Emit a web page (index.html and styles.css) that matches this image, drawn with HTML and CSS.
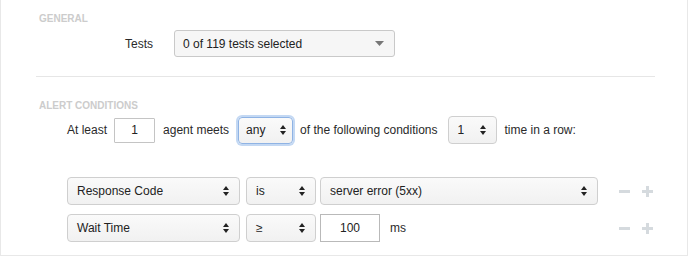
FILE: index.html
```html
<!DOCTYPE html>
<html>
<head>
<meta charset="utf-8">
<link rel="stylesheet" href="styles.css">
</head>
<body>
<div class="panel">
  <section class="general">
    <div class="section-title">GENERAL</div>
    <div class="tests-row">
      <span class="field-label">Tests</span>
      <div class="dropdown tests-dd">
        <span class="dd-text">0 of 119 tests selected</span>
        <svg class="caret" width="9" height="5" viewBox="0 0 9 5"><path d="M0 0h9L4.5 5z" fill="#777"/></svg>
      </div>
    </div>
  </section>
  <hr class="divider">
  <section class="alert">
    <div class="section-title">ALERT CONDITIONS</div>
    <div class="summary-row">
      <span>At least</span>
      <div class="textbox tb-agents">1</div>
      <span>agent meets</span>
      <div class="select sel-any focused"><span>any</span><svg class="updown" width="6" height="10" viewBox="0 0 6 10"><path d="M0 4L3 0L6 4z M0 6L3 10L6 6z" fill="#222"/></svg></div>
      <span>of the following conditions</span>
      <div class="select sel-times"><span>1</span><svg class="updown" width="6" height="10" viewBox="0 0 6 10"><path d="M0 4L3 0L6 4z M0 6L3 10L6 6z" fill="#222"/></svg></div>
      <span>time in a row:</span>
    </div>
    <div class="conditions">
      <div class="cond-row">
        <div class="select sel-metric"><span>Response Code</span><svg class="updown" width="6" height="10" viewBox="0 0 6 10"><path d="M0 4L3 0L6 4z M0 6L3 10L6 6z" fill="#222"/></svg></div>
        <div class="select sel-op"><span>is</span><svg class="updown" width="6" height="10" viewBox="0 0 6 10"><path d="M0 4L3 0L6 4z M0 6L3 10L6 6z" fill="#222"/></svg></div>
        <div class="select sel-value"><span>server error (5xx)</span><svg class="updown" width="6" height="10" viewBox="0 0 6 10"><path d="M0 4L3 0L6 4z M0 6L3 10L6 6z" fill="#222"/></svg></div>
        <div class="row-actions"><span class="minus"></span><span class="plus"></span></div>
      </div>
      <div class="cond-row">
        <div class="select sel-metric"><span>Wait Time</span><svg class="updown" width="6" height="10" viewBox="0 0 6 10"><path d="M0 4L3 0L6 4z M0 6L3 10L6 6z" fill="#222"/></svg></div>
        <div class="select sel-op"><span>≥</span><svg class="updown" width="6" height="10" viewBox="0 0 6 10"><path d="M0 4L3 0L6 4z M0 6L3 10L6 6z" fill="#222"/></svg></div>
        <div class="textbox tb-ms">100</div>
        <span class="unit">ms</span>
        <div class="row-actions"><span class="minus"></span><span class="plus"></span></div>
      </div>
    </div>
  </section>
</div>
</body>
</html>
```

FILE: styles.css
```css
* { box-sizing: border-box; }
html, body { margin: 0; padding: 0; background: #fff; }
body {
  font-family: "Liberation Sans", Arial, Helvetica, sans-serif;
  font-size: 12px;
  color: #2a2a2a;
}
.panel {
  width: 688px;
  height: 256px;
  border: 1px solid #e8e8e8;
  border-top: none;
}
.section-title {
  font-size: 10px;
  line-height: 12px;
  font-weight: bold;
  color: #cccccc;
  padding-left: 38px;
}
.general { padding-top: 13px; }
.tests-row {
  display: flex;
  align-items: center;
  margin-top: 5px;
  padding-left: 124px;
}
.field-label { width: 49px; }
.dropdown {
  display: flex;
  align-items: center;
  justify-content: space-between;
  height: 27px;
  border: 1px solid #c9c9c9;
  border-radius: 3px;
  background: #f6f6f6;
  padding: 0 10px 0 8px;
  color: #222;
}
.tests-dd { width: 221px; }
.divider {
  border: none;
  border-top: 1px solid #e6e6e6;
  margin: 19px 0 0 35px;
  width: 619px;
  height: 0;
}
.alert { padding-top: 23px; }
.summary-row {
  display: flex;
  align-items: center;
  margin-top: 4px;
  padding-left: 66px;
  white-space: nowrap;
}
.textbox {
  display: flex;
  align-items: center;
  justify-content: center;
  border: 1px solid #c4c4c4;
  border-radius: 1px;
  background: #fff;
  color: #222;
}
.tb-agents { width: 41px; height: 25px; margin: 0 8px 0 7px; }
.select {
  display: flex;
  align-items: center;
  justify-content: space-between;
  border: 1px solid #cfcfcf;
  border-radius: 4px;
  background: linear-gradient(#fafafa, #f1f1f1);
  color: #222;
  padding: 0 10px 0 9px;
  height: 28px;
}
.updown { flex: none; }
.sel-any {
  width: 55px;
  height: 27px;
  margin: 0 7px 0 9px;
  padding: 0 6px 0 7px;
}
.focused {
  border-color: #8fb3e4;
  box-shadow: 0 0 0 2px #c3d8f3;
}
.sel-times { width: 49px; margin: 0 8px 0 10px; }
.conditions {
  margin-top: 33px;
  padding-left: 66px;
  display: flex;
  flex-direction: column;
  gap: 9px;
}
.cond-row {
  display: flex;
  align-items: center;
}
.sel-metric { width: 173px; }
.sel-op { width: 70px; margin: 0 4px 0 6px; }
.sel-value { width: 278px; }
.tb-ms { width: 60px; height: 28px; border-color: #b9b9b9; border-radius: 0; }
.unit { margin-left: 10px; width: 208px; }
.row-actions {
  display: flex;
  align-items: center;
  gap: 12px;
  margin-left: 21px;
}
.minus {
  display: block;
  width: 11px;
  height: 3px;
  background: #d5dade;
}
.plus {
  position: relative;
  display: block;
  width: 11px;
  height: 11px;
}
.plus::before, .plus::after {
  content: "";
  position: absolute;
  background: #d5dade;
}
.plus::before { left: 0; top: 4px; width: 11px; height: 3px; }
.plus::after { left: 4px; top: 0; width: 3px; height: 11px; }
```
